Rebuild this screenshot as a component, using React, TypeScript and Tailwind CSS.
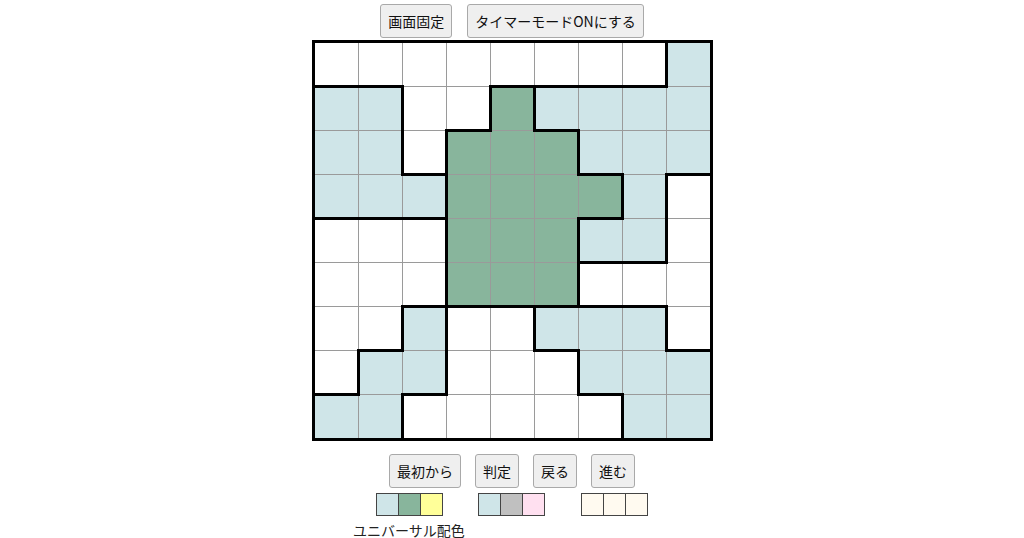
import React from "react";

const REG = [
  "AAAAAAAAB",
  "CCAAGBBBB",
  "CCAGGGBBB",
  "CCCGGGGBI",
  "DDDGGGBBI",
  "DDDGGGIII",
  "DDEFFHHHI",
  "DEEFFFHHH",
  "EEFFFFFHH",
];

const LIGHT = new Set(["B", "C", "E", "H"]);
const GREEN = new Set(["G"]);

function Btn({ children }: { children: React.ReactNode }) {
  return (
    <button className="h-[34px] px-[7px] rounded-[3px] border border-[#a9a9a9] bg-[#efefef] text-[14px] leading-none text-[#111]">
      {children}
    </button>
  );
}

function Cell({ r, c }: { r: number; c: number }) {
  const id = REG[r][c];
  const right = c < 8 && REG[r][c + 1] !== id;
  const bottom = r < 8 && REG[r + 1][c] !== id;
  const bg = GREEN.has(id) ? "bg-[#88b59c]" : LIGHT.has(id) ? "bg-[#cfe5e8]" : "bg-white";
  return (
    <div className={`relative h-[43px] ${bg}`}>
      {right && <span className="absolute z-10 top-[-2px] bottom-[-2px] right-[-2px] w-[3px] bg-black" />}
      {bottom && <span className="absolute z-10 left-[-2px] right-[-2px] bottom-[-2px] h-[3px] bg-black" />}
    </div>
  );
}

function Swatches({ colors }: { colors: string[] }) {
  return (
    <div className="flex border-l border-[#444]">
      {colors.map((col, i) => (
        <div key={i} className={`w-[22px] h-[23px] border-y border-r border-[#444] ${col}`} />
      ))}
    </div>
  );
}

export default function App() {
  const cells = [];
  for (let r = 0; r < 9; r++) for (let c = 0; c < 9; c++) cells.push(<Cell key={`${r}-${c}`} r={r} c={c} />);
  return (
    <div
      className="w-[1024px] h-[538px] bg-white flex flex-col items-center pt-[4px] text-[#222]"
      style={{ fontFamily: '"Noto Sans CJK JP", "Noto Sans", sans-serif' }}
    >
      <div className="flex gap-[15px]">
        <Btn>画面固定</Btn>
        <Btn>タイマーモードONにする</Btn>
      </div>
      <div className="mt-[2px] grid grid-cols-[repeat(9,43px)] gap-px bg-[#9a9a9a] border-[3px] border-black">
        {cells}
      </div>
      <div className="mt-[13px] flex gap-[14px]">
        <Btn>最初から</Btn>
        <Btn>判定</Btn>
        <Btn>戻る</Btn>
        <Btn>進む</Btn>
      </div>
      <div className="mt-[5px] flex w-[272px]">
        <Swatches colors={["bg-[#cfe5e8]", "bg-[#88b59c]", "bg-[#ffff99]"]} />
        <div className="ml-[35px]">
          <Swatches colors={["bg-[#cfe5e8]", "bg-[#c0c0c0]", "bg-[#ffe0f0]"]} />
        </div>
        <div className="ml-[36px]">
          <Swatches colors={["bg-[#fffaf0]", "bg-[#fffaf0]", "bg-[#fffaf0]"]} />
        </div>
      </div>
      <div className="w-[272px] mt-[6px]">
        <div className="-ml-[23px] text-[14px] leading-[16px] text-[#222]">ユニバーサル配色</div>
      </div>
    </div>
  );
}
